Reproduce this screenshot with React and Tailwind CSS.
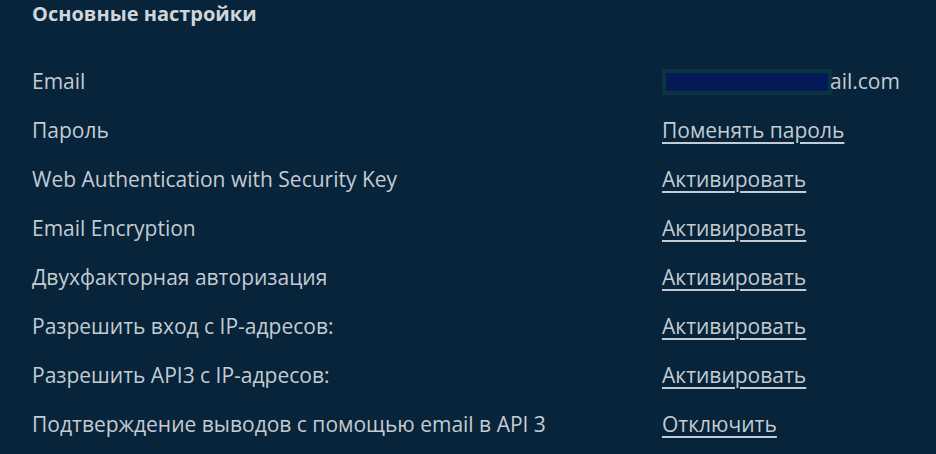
const rows = [
    {label: 'Email', email: true},
    {label: 'Пароль', action: 'Поменять пароль'},
    {label: 'Web Authentication with Security Key', action: 'Активировать'},
    {label: 'Email Encryption', action: 'Активировать'},
    {label: 'Двухфакторная авторизация', action: 'Активировать'},
    {label: 'Разрешить вход с IP-адресов:', action: 'Активировать'},
    {label: 'Разрешить API3 с IP-адресов:', action: 'Активировать'},
    {label: 'Подтверждение выводов с помощью email в API 3', action: 'Отключить'},
];

const App = () => {
    return (
        <main className="h-[454px] w-full overflow-hidden bg-[#07243a] px-8 font-['Open_Sans','Noto_Sans',sans-serif] text-[#c4cbd2]">
            <h1 className="flex h-7 items-center text-[20px] font-bold text-[#d0d5da]">Основные настройки</h1>
            <div className="mt-[29px]">
                {rows.map((row) => (
                    <div key={row.label} className="grid h-[49px] grid-cols-[630px_1fr] items-center text-[21px]">
                        <span>{row.label}</span>
                        {row.email ? (
                            <span className="flex items-center">
                                <span className="h-[26px] w-[170px] border-[4px] border-[#0a3441] bg-[#031a57]"/>
                                <span className="-ml-[2px]">ail.com</span>
                            </span>
                        ) : (
                            <a href="#" className="underline decoration-2 underline-offset-4">{row.action}</a>
                        )}
                    </div>
                ))}
            </div>
        </main>
    );
};

export default App;
